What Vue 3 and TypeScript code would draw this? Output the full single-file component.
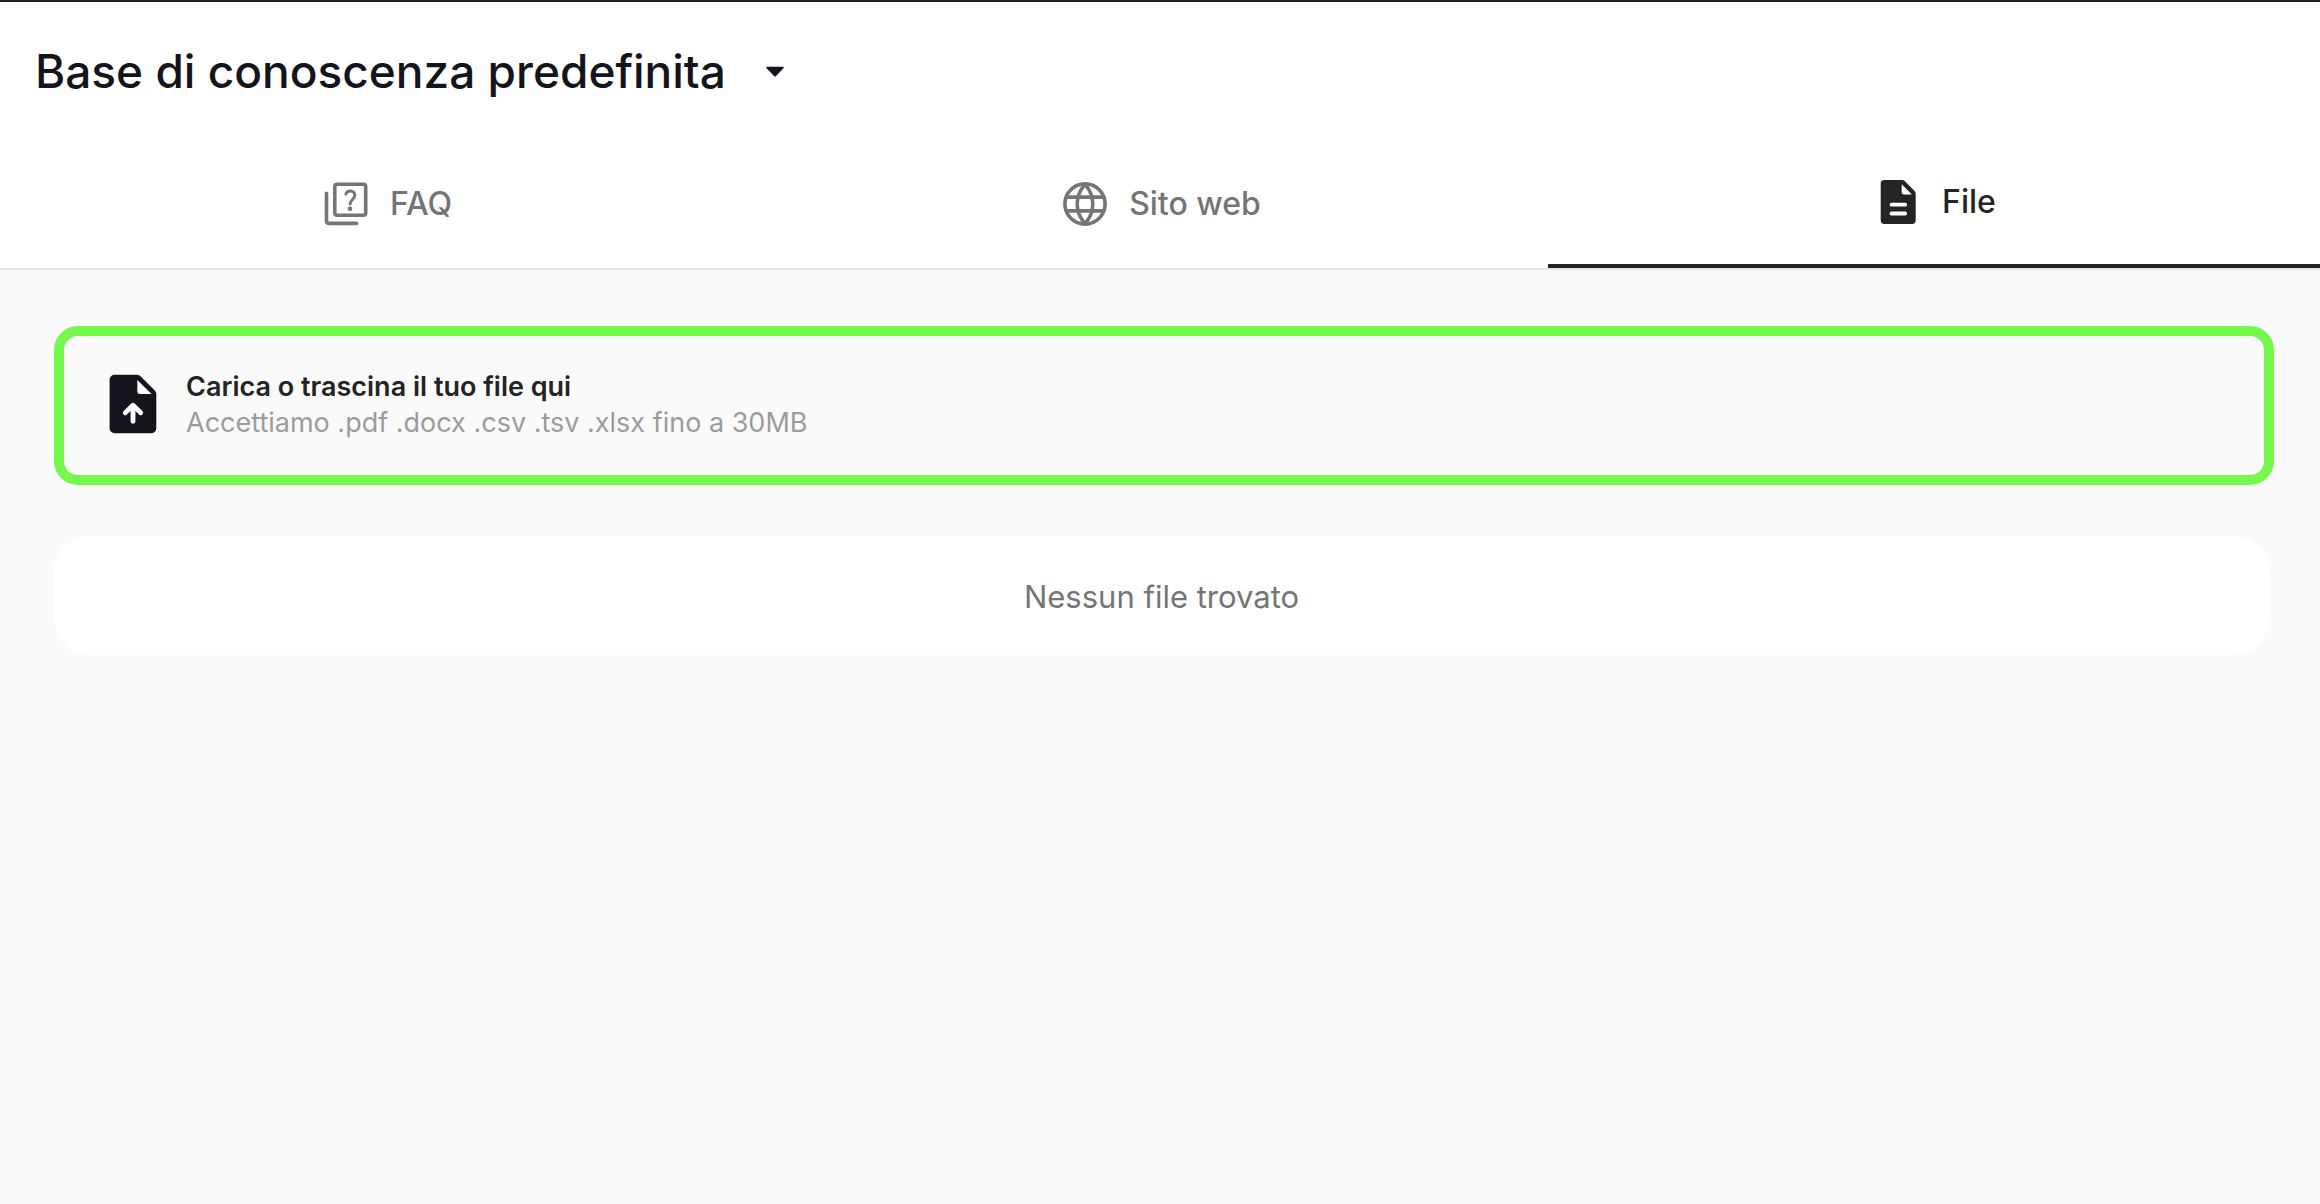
<script setup lang="ts">
import { ref } from 'vue'

type TabId = 'faq' | 'web' | 'file'

const tabs: { id: TabId; label: string }[] = [
  { id: 'faq', label: 'FAQ' },
  { id: 'web', label: 'Sito web' },
  { id: 'file', label: 'File' },
]

const activeTab = ref<TabId>('file')
const knowledgeBase = ref('default')
</script>

<template>
  <div class="page">
    <header class="header">
      <div class="picker">
        <select v-model="knowledgeBase" class="picker-select" aria-label="Base di conoscenza">
          <option value="default">Base di conoscenza predefinita</option>
        </select>
        <svg class="picker-arrow" viewBox="0 0 42 42" aria-hidden="true">
          <path d="M13 16.8H29a.8.8 0 0 1 .5 1.4L22 25.9a1.4 1.4 0 0 1-2 0L12.5 18.2a.8.8 0 0 1 .5-1.4Z" fill="currentColor" />
        </svg>
      </div>
    </header>

    <nav class="tabs" role="tablist">
      <button
        v-for="tab in tabs"
        :key="tab.id"
        type="button"
        role="tab"
        class="tab"
        :class="{ active: tab.id === activeTab }"
        :aria-selected="tab.id === activeTab"
        @click="activeTab = tab.id"
      >
        <svg v-if="tab.id === 'faq'" class="tab-icon" viewBox="0 0 52 52" aria-hidden="true">
          <g fill="none" stroke="currentColor" stroke-width="3.6" stroke-linecap="round" stroke-linejoin="round">
            <rect x="14.8" y="6.3" width="30.9" height="30.9" rx="2.2" />
            <path d="M6.5 15.4V43.2a2.2 2.2 0 0 0 2.2 2.2H36.6" />
            <path d="M25.9 16c.6-1.9 2.2-3.1 4.3-3.1 2.7 0 4.6 1.9 4.6 4.3 0 4-4.6 4.6-4.7 8.8" stroke-width="3" />
          </g>
          <circle cx="30" cy="30.7" r="2.3" fill="currentColor" />
        </svg>
        <svg v-else-if="tab.id === 'web'" class="tab-icon" viewBox="0 0 52 52" aria-hidden="true">
          <g fill="none" stroke="currentColor" stroke-width="3.6" stroke-linejoin="round">
            <circle cx="26" cy="26" r="20.1" />
            <path d="M26 6.4C15.6 18 15.6 34 26 45.6C36.4 34 36.4 18 26 6.4Z" />
            <path d="M7.4 19.1H44.6M7.4 32.9H44.6" />
          </g>
        </svg>
        <svg v-else class="tab-icon" viewBox="0 0 52 52" aria-hidden="true">
          <path d="M12.4 4H30.2a3.6 3.6 0 0 1 2.5 1L42.6 15a3.6 3.6 0 0 1 1.1 2.6V44.3A3.7 3.7 0 0 1 40 48H12.4a3.7 3.7 0 0 1-3.7-3.7V7.7A3.7 3.7 0 0 1 12.4 4Z" fill="currentColor" />
          <path d="M29.7 8.2V16.6a1.8 1.8 0 0 0 1.8 1.8H39.9Z" fill="#fff" />
          <path d="M19.5 28.7H33.2M19.5 37.5H33.2" stroke="#fff" stroke-width="3.8" stroke-linecap="round" />
        </svg>
        <span>{{ tab.label }}</span>
      </button>
    </nav>

    <main class="content">
      <label class="dropzone">
        <input class="file-input" type="file" accept=".pdf,.docx,.csv,.tsv,.xlsx" />
        <svg class="upload-icon" viewBox="0 0 70 70" aria-hidden="true">
          <path d="M16.5 5.8H39a5 5 0 0 1 3.5 1.5L56.8 21.4a5 5 0 0 1 1.5 3.5V59.3a4.9 4.9 0 0 1-4.9 4.9H16.5a4.9 4.9 0 0 1-4.9-4.9V10.7a4.9 4.9 0 0 1 4.9-4.9Z" fill="currentColor" />
          <path d="M39.3 10.9V22.6a2.4 2.4 0 0 0 2.4 2.4H53.6Z" fill="#fff" />
          <path d="M35 52.3V36.8M27.3 43.8L35 36.2L42.7 43.8" fill="none" stroke="#fff" stroke-width="4.8" stroke-linecap="round" stroke-linejoin="round" />
        </svg>
        <span class="dropzone-text">
          <strong class="dropzone-title">Carica o trascina il tuo file qui</strong>
          <span class="dropzone-hint">Accettiamo .pdf .docx .csv .tsv .xlsx fino a 30MB</span>
        </span>
      </label>

      <section class="empty">
        <p class="empty-text">Nessun file trovato</p>
      </section>
    </main>
  </div>
</template>

<style>
body {
  background: #fafafa;
}
</style>

<style scoped>
.page {
  font-family: Inter, 'Liberation Sans', sans-serif;
  color: #14141d;
  border-top: 2px solid #1d1c2c;
}

.header {
  box-sizing: border-box;
  display: flex;
  align-items: center;
  min-height: 136px;
  padding: 2px 35px 0;
  background: #fff;
}

.picker {
  display: flex;
  align-items: center;
  gap: 28px;
}

.picker-select {
  appearance: none;
  margin: 0;
  padding: 0;
  border: 0;
  background: none;
  color: inherit;
  font: 500 46px/60px Inter, 'Liberation Sans', sans-serif;
  cursor: pointer;
}

.picker-arrow {
  width: 42px;
  height: 42px;
  pointer-events: none;
}

.tabs {
  display: grid;
  grid-template-columns: repeat(3, 1fr);
  gap: 2px;
  background: #fff;
  border-bottom: 2px solid #e3e3e3;
}

.tab {
  display: flex;
  align-items: center;
  justify-content: center;
  gap: 18px;
  height: 130px;
  margin: 0;
  padding: 2px 0 0;
  border: 0;
  background: none;
  color: #757575;
  font: 500 32px/40px Inter, 'Liberation Sans', sans-serif;
  cursor: pointer;
}

.tab.active {
  color: #242424;
  border-bottom: 4px solid #242424;
}

.tab-icon {
  width: 52px;
  height: 52px;
}

.content {
  display: flex;
  flex-direction: column;
  gap: 51px;
  padding: 56px 51px 56px 54px;
}

.dropzone {
  position: relative;
  display: flex;
  align-items: center;
  gap: 18px;
  margin-right: -5px;
  padding: 30px 34px 34px;
  border: 10px solid #74f84b;
  border-radius: 24px;
  cursor: pointer;
}

.file-input {
  position: absolute;
  inset: 0;
  width: 100%;
  opacity: 0;
  cursor: pointer;
}

.upload-icon {
  width: 70px;
  height: 70px;
}

.dropzone-text {
  display: flex;
  flex-direction: column;
  padding-top: 3px;
  font-size: 27px;
  line-height: 36px;
}

.dropzone-title {
  font-weight: 600;
  color: #242424;
}

.dropzone-hint {
  color: #9c9c9c;
}

.empty {
  box-sizing: border-box;
  display: flex;
  align-items: center;
  justify-content: center;
  min-height: 119px;
  padding-top: 2px;
  background: #fff;
  border-radius: 36px;
}

.empty-text {
  margin: 0;
  color: #757575;
  font-size: 31px;
  line-height: 40px;
}
</style>
